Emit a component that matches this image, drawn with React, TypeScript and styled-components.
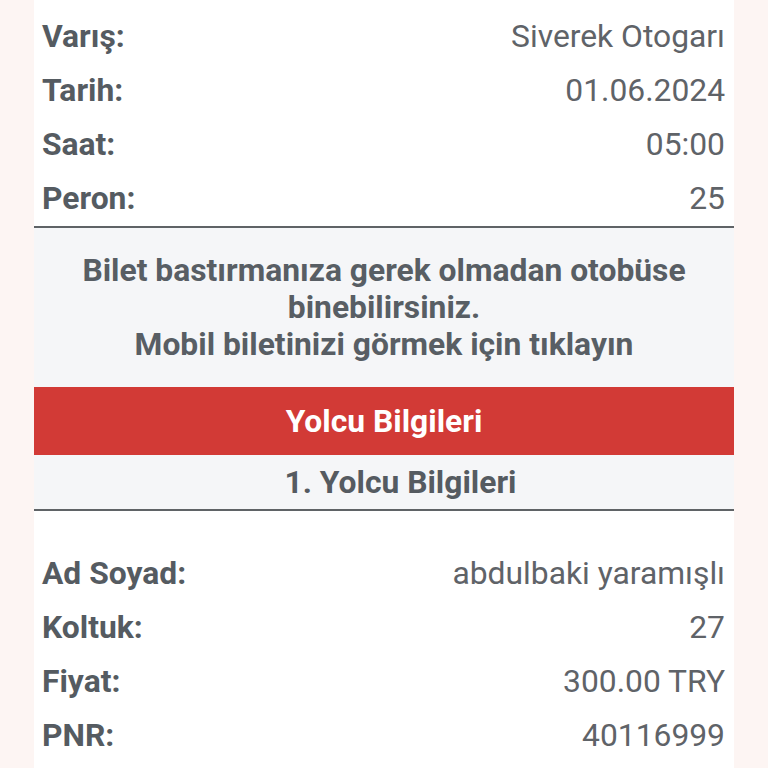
import styled, { createGlobalStyle } from "styled-components";

const GlobalStyle = createGlobalStyle`
  html, body {
    margin: 0;
    padding: 0;
    background: #fdf5f3;
    font-family: Roboto, "Liberation Sans", sans-serif;
  }
`;

const Page = styled.div`
  width: 700px;
  margin: 0 auto;
  padding-top: 10px;
  background: #ffffff;
  min-height: 768px;
`;

const Section = styled.div<{ $top?: number }>`
  padding: ${(p) => p.$top || 0}px 9px 0 8px;
`;

const Row = styled.div`
  display: flex;
  justify-content: space-between;
  align-items: center;
  height: 54px;
  font-size: 31.8px;
  line-height: 1;
`;

const Label = styled.span`
  font-weight: 700;
  color: #555b61;
`;

const Value = styled.span`
  color: #5f6368;
`;

const Divider = styled.hr`
  margin: 0;
  border: none;
  height: 2px;
  background: #5f6366;
`;

const Notice = styled.div`
  background: #f5f6f8;
  height: 159px;
  display: flex;
  align-items: center;
  justify-content: center;
  text-align: center;
  font-size: 31.8px;
  line-height: 37px;
  font-weight: 700;
  color: #585e64;
`;

const RedBar = styled.div`
  background: #d23a36;
  height: 68px;
  display: flex;
  align-items: center;
  justify-content: center;
  color: #ffffff;
  font-size: 31.8px;
  font-weight: 700;
`;

const SubHeader = styled.div`
  background: #f5f6f8;
  height: 54px;
  padding-left: 33px;
  display: flex;
  align-items: center;
  justify-content: center;
  color: #555b61;
  font-size: 31.8px;
  font-weight: 700;
`;

const trip = [
  ["Varış:", "Siverek Otogarı"],
  ["Tarih:", "01.06.2024"],
  ["Saat:", "05:00"],
  ["Peron:", "25"],
];

const passenger = [
  ["Ad Soyad:", "abdulbaki yaramışlı"],
  ["Koltuk:", "27"],
  ["Fiyat:", "300.00 TRY"],
  ["PNR:", "40116999"],
];

export default function App() {
  return (
    <>
      <GlobalStyle />
      <Page>
        <Section>
          {trip.map(([l, v]) => (
            <Row key={l}>
              <Label>{l}</Label>
              <Value>{v}</Value>
            </Row>
          ))}
        </Section>
        <Divider />
        <Notice>
          <div>
            Bilet bastırmanıza gerek olmadan otobüse
            <br />
            binebilirsiniz.
            <br />
            Mobil biletinizi görmek için tıklayın
          </div>
        </Notice>
        <RedBar>Yolcu Bilgileri</RedBar>
        <SubHeader>1. Yolcu Bilgileri</SubHeader>
        <Divider />
        <Section $top={36}>
          {passenger.map(([l, v]) => (
            <Row key={l}>
              <Label>{l}</Label>
              <Value>{v}</Value>
            </Row>
          ))}
        </Section>
      </Page>
    </>
  );
}
